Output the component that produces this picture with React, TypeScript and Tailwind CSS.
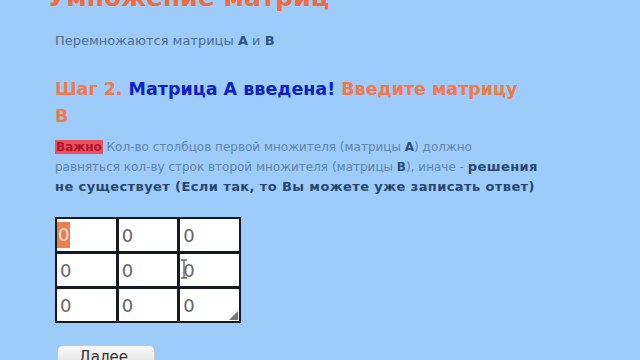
export default function App() {
  const rows = [
    ["0", "0", "0"],
    ["0", "0", "0"],
    ["0", "0", "0"],
  ];

  return (
    <div
      className="w-[640px] h-[360px] overflow-hidden bg-[#9dcbfa]"
      style={{ fontFamily: '"DejaVu Sans", Verdana, sans-serif' }}
    >
      <div className="pl-[55px] pr-[60px]">
        {/* Title, scrolled mostly out of view */}
        <h1 className="ml-[-8px] mt-[-17px] text-[25px] leading-[30px] font-bold text-[#f26b3a]">
          Умножение матриц
        </h1>

        <p className="mt-[20px] text-[13px] leading-[16px] text-[#4c6f95]">
          Перемножаются матрицы <b className="text-[#2f5580]">A</b> и{" "}
          <b className="text-[#2f5580]">B</b>
        </p>

        <h2 className="mt-[27px] text-[17.5px] leading-[27px] font-bold text-[#f07a4c]">
          Шаг 2. <span className="text-[#0a1fc4]">Матрица A введена!</span>{" "}
          Введите матрицу
          <br />B
        </h2>

        <p className="mt-[8px] text-[12px] leading-[19px] text-[#5f84ad]">
          <b className="bg-[#e9515e] text-[#b3122a] px-[1px]">Важно</b> Кол-во
          столбцов первой множителя (матрицы <b className="text-[#2a4f7d]">A</b>)
          должно
          <br />
          равняться кол-ву строк второй множителя (матрицы{" "}
          <b className="text-[#2a4f7d]">B</b>), иначе -{" "}
          <b className="text-[#27476f] text-[13px] tracking-[0.4px]">решения</b>
          <br />
          <b className="text-[#27476f] text-[13px] tracking-[0.4px]">
            не существует (Если так, то Вы можете уже записать ответ)
          </b>
        </p>

        {/* Matrix input */}
        <div className="mt-[20px] w-[186px] grid grid-cols-3 gap-[3px] bg-[#151a22] p-[2px]">
          {rows.map((row, r) =>
            row.map((v, c) => (
              <div
                key={`${r}-${c}`}
                className="relative h-[32px] bg-white pl-[3px] flex items-center text-[18px] text-[#666]"
              >
                {r === 0 && c === 0 ? (
                  <span className="ml-[-3px] bg-[#ee7d4e] text-[#fbe2d6] px-[1px] leading-[26px]">
                    {v}
                  </span>
                ) : (
                  <span>{v}</span>
                )}
                {r === 1 && c === 2 && (
                  <svg
                    className="absolute left-[0px] top-[5px]"
                    width="8"
                    height="20"
                    viewBox="0 0 8 20"
                  >
                    <path
                      d="M1 1h6M4 1v18M1 19h6"
                      stroke="#666"
                      strokeWidth="1.4"
                      fill="none"
                    />
                  </svg>
                )}
                {r === 2 && c === 2 && (
                  <svg
                    className="absolute right-[1px] bottom-[1px]"
                    width="9"
                    height="9"
                    viewBox="0 0 9 9"
                  >
                    <path d="M9 0L9 9L0 9Z" fill="#777" />
                  </svg>
                )}
              </div>
            ))
          )}
        </div>

        <button className="mt-[22px] ml-[2px] w-[98px] h-[30px] rounded-[6px] border border-[#c8c8c8] bg-gradient-to-b from-[#f8f8f8] to-[#dcdcdc] text-[15px] text-[#333] text-left pl-[21px] pb-[6px]">
          Далее
        </button>
      </div>
    </div>
  );
}
